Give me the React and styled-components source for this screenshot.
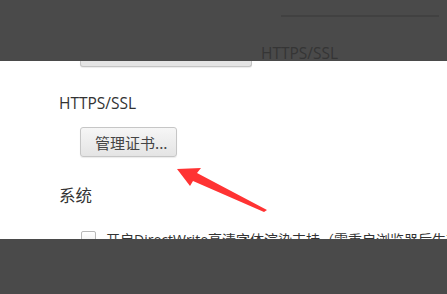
import React from "react";
import styled, { createGlobalStyle } from "styled-components";

const GlobalStyle = createGlobalStyle`
  html, body {
    margin: 0;
    padding: 0;
    background: #ffffff;
  }
  body {
    font-family: "Open Sans", "Noto Sans CJK SC", sans-serif;
    color: #333333;
  }
`;

const Page = styled.div`
  width: 447px;
  height: 294px;
  display: grid;
  grid-template-rows: 61px 178px 55px;
  overflow: hidden;
`;

const TopShade = styled.div`
  background: #4a4a4a;
  overflow: hidden;
  display: flex;
  flex-direction: column;
  align-items: flex-start;
  padding: 15px 0 0 261px;
  box-sizing: border-box;
`;

const BottomShade = styled.div`
  background: #4a4a4a;
`;

const GhostLine = styled.div`
  flex: 0 0 2px;
  margin-left: 20px;
  width: 158px;
  background: #414141;
`;

const GhostText = styled.div`
  flex: 0 0 20px;
  margin-top: 26px;
  font-size: 15.5px;
  line-height: 20px;
  color: #353535;
  white-space: nowrap;
`;

const Content = styled.div`
  position: relative;
  overflow: hidden;
  display: flex;
  flex-direction: column;
  align-items: flex-start;
  padding-left: 59px;
`;

const ButtonStub = styled.div`
  flex: 0 0 6px;
  box-sizing: border-box;
  margin-left: 21px;
  width: 172px;
  background: #e4e4e4;
  border: 1px solid #c4c4c4;
  border-top: none;
  border-radius: 0 0 3px 3px;
  box-shadow: 0 1px 1px rgba(0, 0, 0, 0.08);
`;

const Heading = styled.div`
  flex: 0 0 ${(p) => p.$lh}px;
  margin-top: ${(p) => p.$mt}px;
  font-size: ${(p) => p.$size}px;
  line-height: ${(p) => p.$lh}px;
  color: #333333;
  white-space: nowrap;
`;

const Button = styled.button`
  flex: 0 0 30px;
  margin: 14px 0 0 21px;
  width: 97px;
  padding: 0 10px 0 14px;
  box-sizing: border-box;
  font-family: "Noto Sans CJK SC", "Open Sans", sans-serif;
  font-size: 15px;
  color: #444444;
  background: linear-gradient(#f6f6f6, #e4e4e4);
  border: 1px solid #c6c6c6;
  border-radius: 3px;
  box-shadow: 0 1px 1px rgba(0, 0, 0, 0.08);
  white-space: nowrap;
  text-align: left;
`;

const CheckRow = styled.label`
  flex: 0 0 20px;
  margin: ${(p) => p.$mt}px 0 0 22px;
  display: flex;
  align-items: flex-start;
  gap: 10px;
  font-size: 14px;
  line-height: 20px;
  color: #333333;
  white-space: nowrap;
`;

const Box = styled.span`
  flex: 0 0 auto;
  box-sizing: border-box;
  width: 15px;
  height: 15px;
  margin-top: 1px;
  border: 1px solid #b8b8b8;
  border-radius: 2px;
  background: linear-gradient(#ffffff, #ececec);
`;

const Arrow = styled.svg`
  position: absolute;
  left: 170px;
  top: 99px;
`;

export default function App() {
  return (
    <>
      <GlobalStyle />
      <Page>
        <TopShade>
          <GhostLine />
          <GhostText>HTTPS/SSL</GhostText>
        </TopShade>
        <Content>
          <ButtonStub />
          <Heading $mt={26} $size={15.5} $lh={20}>
            HTTPS/SSL
          </Heading>
          <Button>管理证书...</Button>
          <Heading $mt={28} $size={16.5} $lh={22}>
            系统
          </Heading>
          <CheckRow $mt={23}>
            <Box />
            开启DirectWrite高清字体渲染支持（需重启浏览器后生效）
          </CheckRow>
          <Arrow width="100" height="56" viewBox="0 0 100 56">
            <polygon
              points="7,9 31,8 27,13 97,50 94,52 23,21 20,26"
              fill="#ff3333"
            />
          </Arrow>
        </Content>
        <BottomShade />
      </Page>
    </>
  );
}
